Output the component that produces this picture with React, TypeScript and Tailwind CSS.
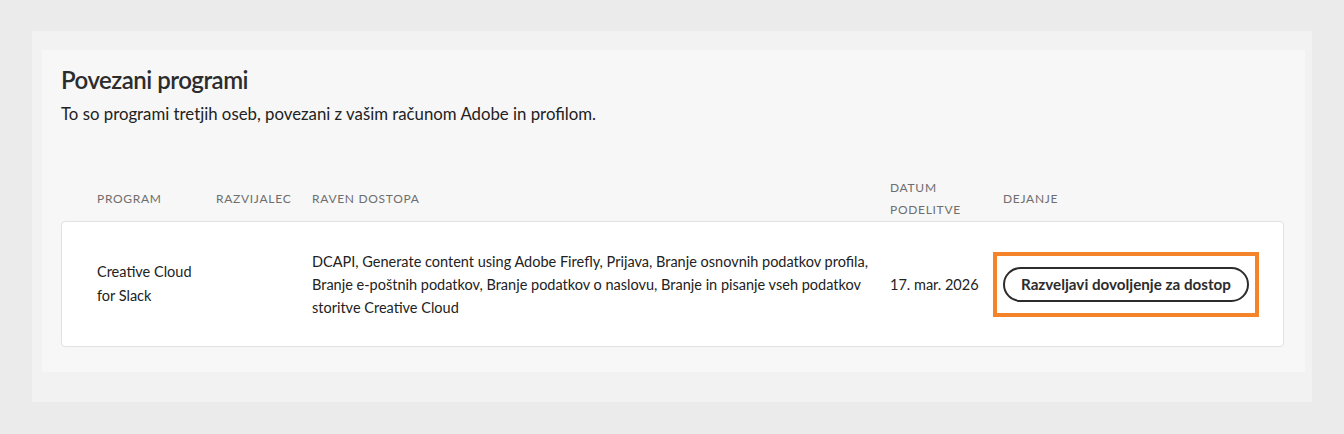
import React from 'react';

const font = { fontFamily: 'Lato, "Liberation Sans", sans-serif' };

const columns = 'grid grid-cols-[119px_96px_578px_113px_1fr]';

const App = () => {
  return (
    <div className="min-h-[434px] bg-[#ebebeb] pt-[31px] pl-[32px] pr-[32px] pb-[32px]" style={font}>
      <div className="bg-[#f2f2f2] pl-[10px] pr-[7px] pt-[19px] pb-[30px]">
        <div className="bg-[#f7f7f7] pl-[19px] pr-[21px] pt-[14px] pb-[25px]">
          <h2 className="text-[24px] leading-[32px] font-semibold tracking-[-0.5px] text-[#2c2c2c]">Povezani programi</h2>
          <p className="mt-[6px] text-[16.8px] leading-[24px] text-[#222]">
            To so programi tretjih oseb, povezani z vašim računom Adobe in profilom.
          </p>

          <div className={`${columns} mt-[51px] h-[44px] items-center pl-[36px] text-[12px] leading-[22px] tracking-[0.7px] text-[#6e6e6e]`}>
            <div>PROGRAM</div>
            <div>RAZVIJALEC</div>
            <div>RAVEN DOSTOPA</div>
            <div>
              DATUM
              <br />
              PODELITVE
            </div>
            <div>DEJANJE</div>
          </div>

          <div className={`${columns} h-[126px] items-center rounded-[4px] border border-[#e1e1e1] bg-white pl-[35px] text-[14.5px] text-[#222]`}>
            <div className="leading-[24px]">
              Creative Cloud
              <br />
              for Slack
            </div>
            <div></div>
            <div className="pr-[8px] leading-[23px]">
              DCAPI, Generate content using Adobe Firefly, Prijava, Branje osnovnih podatkov profila, Branje e-poštnih podatkov, Branje podatkov o naslovu, Branje in pisanje vseh podatkov storitve Creative Cloud
            </div>
            <div className="leading-[23px]">17. mar. 2026</div>
            <div className="-ml-[10px]">
              <div className="inline-flex border-[4px] border-[#f5832a] px-[6px] py-[11px]">
                <button className="h-[35px] rounded-full border-2 border-[#2c2c2c] px-[16px] text-[15.2px] font-bold text-[#2c2c2c]">
                  Razveljavi dovoljenje za dostop
                </button>
              </div>
            </div>
          </div>
        </div>
      </div>
    </div>
  );
};

export default App;
